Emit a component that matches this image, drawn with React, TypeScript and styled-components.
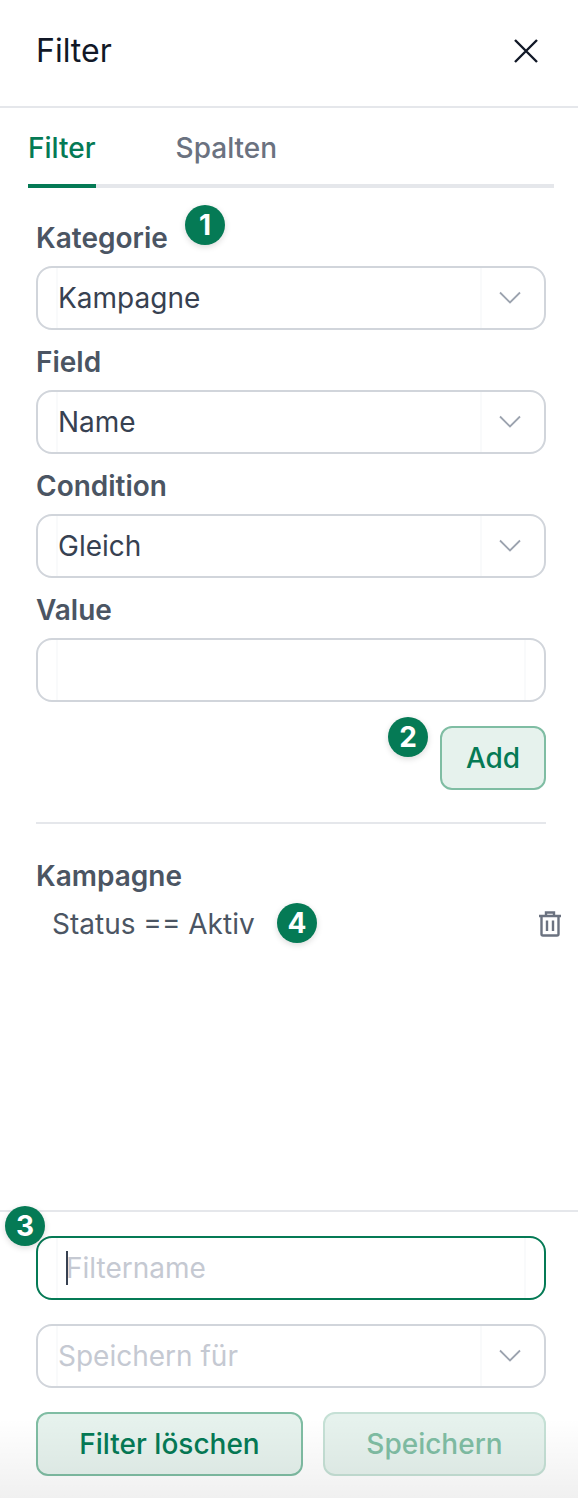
import styled, { createGlobalStyle } from 'styled-components';

const GREEN = '#057a55';

const GlobalStyle = createGlobalStyle`
  html, body {
    margin: 0;
    padding: 0;
    background: #fff;
  }
  * {
    box-sizing: border-box;
  }
`;

const Panel = styled.div`
  position: relative;
  display: flex;
  flex-direction: column;
  width: 578px;
  height: 1498px;
  overflow: hidden;
  background: #fff;
  font-family: Inter, 'Liberation Sans', sans-serif;
  color: #374151;
`;

const Header = styled.header`
  display: flex;
  justify-content: space-between;
  align-items: center;
  height: 108px;
  padding: 0 38px 8px 36px;
  border-bottom: 2px solid #e5e7eb;
`;

const Title = styled.h1`
  margin: 3px 0 0;
  font-size: 32px;
  line-height: 40px;
  font-weight: 400;
  color: #111827;
`;

const CloseButton = styled.div`
  display: flex;
  margin-top: 4px;
  color: #111827;
`;

const Tabs = styled.nav`
  display: flex;
  gap: 80px;
  height: 80px;
  margin: 0 24px 0 28px;
  border-bottom: 4px solid #e5e7eb;
`;

const Tab = styled.div<{ $active?: boolean }>`
  height: 80px;
  padding-top: 22px;
  font-size: 28px;
  line-height: 36px;
  font-weight: 500;
  color: ${(p) => (p.$active ? GREEN : '#6b7280')};
  border-bottom: 4px solid ${(p) => (p.$active ? GREEN : 'transparent')};
`;

const Form = styled.section`
  display: flex;
  flex-direction: column;
  padding: 18px 32px 0 36px;
`;

const Group = styled.div`
  position: relative;
  display: flex;
  flex-direction: column;
`;

const Label = styled.label`
  height: 60px;
  padding-top: 14px;
  font-size: 28px;
  line-height: 36px;
  font-weight: 600;
  color: #4b5563;
`;

const Field = styled.div<{ $focused?: boolean }>`
  position: relative;
  display: flex;
  align-items: stretch;
  height: 64px;
  border: 2px solid ${(p) => (p.$focused ? GREEN : '#d1d5db')};
  border-radius: 16px;
  background: #fff;
`;

const FieldLead = styled.div`
  flex: none;
  width: 20px;
  border-right: 2px solid #f9fafb;
`;

const FieldValue = styled.div<{ $muted?: boolean; $inset?: number }>`
  flex: 1;
  display: flex;
  align-items: center;
  padding-left: ${(p) => p.$inset ?? 0}px;
  font-size: 28px;
  line-height: 36px;
  color: ${(p) => (p.$muted ? '#c5c9d2' : '#374151')};
`;

const FieldTrail = styled.div<{ $wide?: boolean }>`
  flex: none;
  display: flex;
  align-items: center;
  justify-content: center;
  width: ${(p) => (p.$wide ? 64 : 20)}px;
  border-left: 2px solid #f9fafb;
  color: #9ca3af;
`;

const Caret = styled.span`
  position: absolute;
  left: 28px;
  top: 13px;
  width: 2px;
  height: 34px;
  background: #374151;
`;

const AddRow = styled.div`
  position: relative;
  display: flex;
  justify-content: flex-end;
  margin-top: 24px;
`;

const Button = styled.button<{ $disabled?: boolean; $width: number }>`
  flex: none;
  width: ${(p) => p.$width}px;
  height: 64px;
  padding: 0;
  border: 2px solid ${(p) => (p.$disabled ? '#c5e0d5' : '#7fbda3')};
  border-radius: 12px;
  background: #e6f2ed;
  font-family: inherit;
  font-size: 28px;
  line-height: 36px;
  font-weight: 500;
  color: ${(p) => (p.$disabled ? '#7fbda3' : GREEN)};
`;

const Divider = styled.hr`
  width: 510px;
  height: 2px;
  margin: 32px 0 0;
  border: 0;
  background: #e5e7eb;
`;

const ActiveFilters = styled.section`
  display: flex;
  flex-direction: column;
  padding: 0 16px 0 36px;
  flex: 1;
`;

const GroupName = styled.h3`
  margin: 34px 0 0;
  font-size: 28px;
  line-height: 36px;
  font-weight: 600;
  color: #4b5563;
`;

const Rule = styled.div`
  position: relative;
  display: flex;
  align-items: center;
  justify-content: space-between;
  height: 40px;
  margin-top: 10px;
  padding-left: 16px;
  font-size: 28px;
  line-height: 36px;
  color: #4b5563;
`;

const Footer = styled.footer`
  position: relative;
  display: flex;
  flex-direction: column;
  gap: 24px;
  height: 288px;
  padding: 24px 32px 0 36px;
  border-top: 2px solid #e5e7eb;
`;

const ButtonRow = styled.div`
  display: flex;
  justify-content: space-between;
`;

const Badge = styled.span<{ $top: number; $left: number }>`
  position: absolute;
  top: ${(p) => p.$top}px;
  left: ${(p) => p.$left}px;
  display: flex;
  align-items: center;
  justify-content: center;
  width: 40px;
  height: 40px;
  border-radius: 50%;
  background: ${GREEN};
  box-shadow: 0 2px 6px rgba(0, 0, 0, 0.15);
  font-size: 28px;
  font-weight: 700;
  color: #fff;
  z-index: 2;
`;

const BottomFade = styled.div`
  position: absolute;
  left: 0;
  right: 0;
  bottom: 0;
  height: 80px;
  background: linear-gradient(rgba(0, 0, 0, 0), rgba(0, 0, 0, 0.06));
  pointer-events: none;
  z-index: 3;
`;

const CloseIcon = () => (
  <svg width="28" height="28" viewBox="0 0 28 28" fill="none" stroke="currentColor" strokeWidth="2.4">
    <path d="M3 3l22 22M25 3L3 25" />
  </svg>
);

const ChevronSlot = styled.span`
  display: flex;
  margin: 0 6px 2px 0;
`;

const Chevron = () => (
  <ChevronSlot>
    <svg width="22" height="13" viewBox="0 0 22 13" fill="none" stroke="currentColor" strokeWidth="1.8">
      <path d="M1 1.5l10 10 10-10" />
    </svg>
  </ChevronSlot>
);

const TrashIcon = () => (
  <svg width="24" height="28" viewBox="0 0 24 28" fill="none" stroke="#6b7280" strokeWidth="2.4">
    <path d="M1 6h22M8 6V2.5h8V6M3.5 6v18a1.5 1.5 0 0 0 1.5 1.5h14a1.5 1.5 0 0 0 1.5-1.5V6M9 10.5v10.5M15 10.5v10.5" />
  </svg>
);

const SelectField = ({ value, muted }: { value: string; muted?: boolean }) => (
  <Field>
    <FieldLead />
    <FieldValue $muted={muted}>{value}</FieldValue>
    <FieldTrail $wide>
      <Chevron />
    </FieldTrail>
  </Field>
);

export default function App() {
  return (
    <>
      <GlobalStyle />
      <Panel>
        <Header>
          <Title>Filter</Title>
          <CloseButton>
            <CloseIcon />
          </CloseButton>
        </Header>
        <Tabs>
          <Tab $active>Filter</Tab>
          <Tab>Spalten</Tab>
        </Tabs>
        <Form>
          <Group>
            <Label>Kategorie</Label>
            <Badge $top={-1} $left={149}>1</Badge>
            <SelectField value="Kampagne" />
          </Group>
          <Group>
            <Label>Field</Label>
            <SelectField value="Name" />
          </Group>
          <Group>
            <Label>Condition</Label>
            <SelectField value="Gleich" />
          </Group>
          <Group>
            <Label>Value</Label>
            <Field>
              <FieldLead />
              <FieldValue />
              <FieldTrail />
            </Field>
          </Group>
          <AddRow>
            <Badge $top={-9} $left={352}>2</Badge>
            <Button $width={106}>Add</Button>
          </AddRow>
          <Divider />
        </Form>
        <ActiveFilters>
          <GroupName>Kampagne</GroupName>
          <Rule>
            Status == Aktiv
            <Badge $top={-1} $left={241}>4</Badge>
            <TrashIcon />
          </Rule>
        </ActiveFilters>
        <Footer>
          <Badge $top={-6} $left={5}>3</Badge>
          <Field $focused>
            <FieldLead />
            <Caret />
            <FieldValue $muted $inset={8}>Filtername</FieldValue>
            <FieldTrail />
          </Field>
          <SelectField value="Speichern für" muted />
          <ButtonRow>
            <Button $width={267}>Filter löschen</Button>
            <Button $width={223} $disabled>Speichern</Button>
          </ButtonRow>
        </Footer>
        <BottomFade />
      </Panel>
    </>
  );
}
